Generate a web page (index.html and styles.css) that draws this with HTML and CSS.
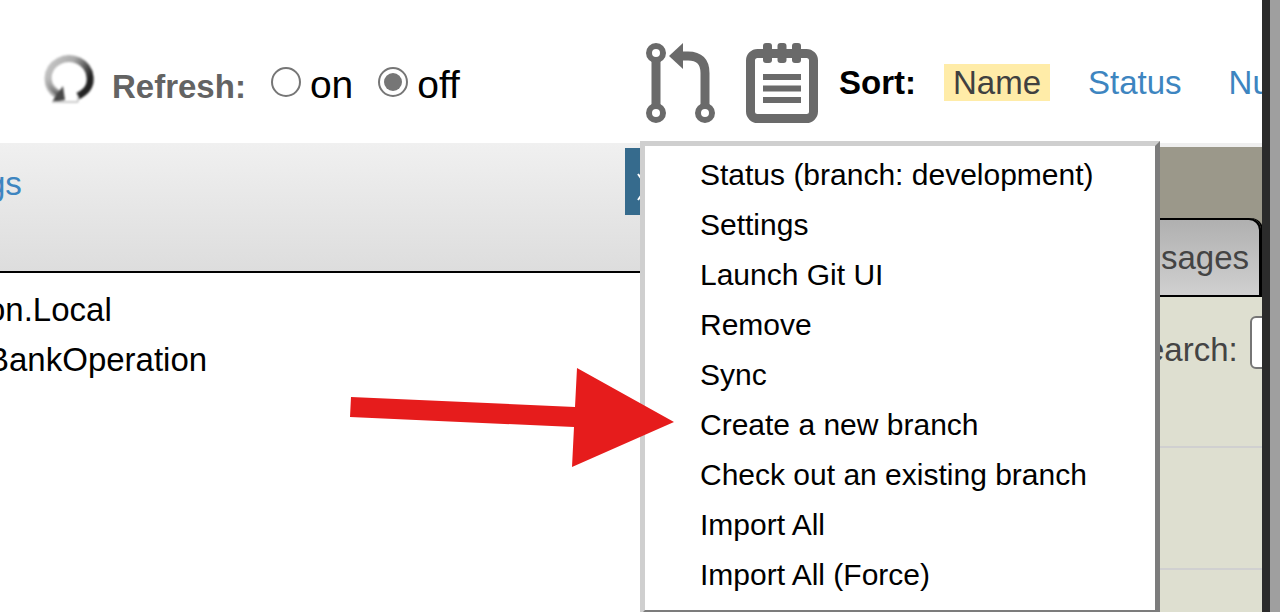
FILE: index.html
```html
<!DOCTYPE html>
<html lang="en">
<head>
<meta charset="utf-8">
<title>Branch menu</title>
<link rel="stylesheet" href="styles.css">
</head>
<body>
<div class="window">
  <div class="app">
    <header class="toolbar">
      <div class="refresh">
        <svg class="refresh-icon" width="50" height="50" viewBox="0 0 50 50" aria-hidden="true">
          <defs>
            <linearGradient id="ring" x1="0" y1="0" x2="1" y2="0.5">
              <stop offset="0" stop-color="#c8c8c8"/>
              <stop offset="0.5" stop-color="#aaa"/>
              <stop offset="1" stop-color="#222"/>
            </linearGradient>
            <linearGradient id="tail" x1="0" y1="0" x2="0" y2="1">
              <stop offset="0" stop-color="#aaa" stop-opacity="0"/>
              <stop offset="1" stop-color="#555"/>
            </linearGradient>
          </defs>
          <path d="M34 42C44 37 47 31 46 23A21 20 0 1 0 13 41" fill="none" stroke="url(#ring)" stroke-width="7"/>
          <path d="M1 23C2 31 6 37 13 42L17 37C11 34 8 29 8 23Z" fill="url(#tail)"/>
          <path d="M19 32L21 46L8 48L13 40Z" fill="#484848"/>
          <path d="M8 48H34M34 42V48" fill="none" stroke="#ccc" stroke-width="2"/>
        </svg>
        <span class="refresh-label" id="refresh-label">Refresh:</span>
        <div class="choices" role="radiogroup" aria-labelledby="refresh-label">
          <label class="choice"><input class="radio" type="radio" name="refresh" value="on">on</label>
          <label class="choice"><input class="radio" type="radio" name="refresh" value="off" checked>off</label>
        </div>
      </div>
      <div class="tools">
        <button class="icon-button" type="button" aria-label="Source control" aria-expanded="true">
          <svg width="70" height="80" viewBox="0 0 70 80" aria-hidden="true" fill="none" stroke="#6a6a6a">
            <circle cx="10" cy="10" r="7" stroke-width="6"/>
            <circle cx="10" cy="70" r="7" stroke-width="6"/>
            <circle cx="59" cy="70" r="7" stroke-width="6"/>
            <path d="M10 18V62M59 62V30Q59 13 42 13H36" stroke-width="9"/>
            <path d="M23 13L37 0V26Z" fill="#6a6a6a" stroke="none"/>
          </svg>
        </button>
        <button class="icon-button" type="button" aria-label="Notes">
          <svg width="72" height="80" viewBox="0 0 72 80" aria-hidden="true" fill="none" stroke="#6a6a6a">
            <rect x="4.5" y="10.5" width="63" height="65" rx="7" stroke-width="9"/>
            <g fill="#6a6a6a" stroke="none">
              <rect x="17" y="0" width="9" height="20" rx="3"/>
              <rect x="31.500" y="0" width="9" height="20" rx="3"/>
              <rect x="46" y="0" width="9" height="20" rx="3"/>
            </g>
            <path d="M17 34H55M17 45.500H55M17 57H55" stroke-width="6"/>
          </svg>
        </button>
        <nav class="sort" aria-label="Sort">
          <b class="sort-title">Sort:</b>
          <a class="sort-link sort-active" href="#name">Name</a>
          <a class="sort-link" href="#status">Status</a>
          <a class="sort-link" href="#nu">Nu</a>
        </nav>
        <ul class="menu">
          <li><a class="menu-link" href="#git-status">Status (branch: development)</a></li>
          <li><a class="menu-link" href="#settings">Settings</a></li>
          <li><a class="menu-link" href="#launch">Launch Git UI</a></li>
          <li><a class="menu-link" href="#remove">Remove</a></li>
          <li><a class="menu-link" href="#sync">Sync</a></li>
          <li><a class="menu-link" href="#create">Create a new branch</a></li>
          <li><a class="menu-link" href="#checkout">Check out an existing branch</a></li>
          <li><a class="menu-link" href="#import">Import All</a></li>
          <li><a class="menu-link" href="#import-force">Import All (Force)</a></li>
        </ul>
      </div>
    </header>
    <div class="body">
      <main class="listing">
        <div class="listing-head">
          <a class="head-link" href="#gs">gs</a>
          <button class="toggle" type="button" aria-label="Expand">
            <svg width="20" height="28" viewBox="0 0 20 28" aria-hidden="true"><path d="M1 1L10 14L1 27M9 1L18 14L9 27" fill="none" stroke="#fff" stroke-width="2"/></svg>
          </button>
        </div>
        <ul class="rows">
          <li>on.Local</li>
          <li>BankOperation</li>
        </ul>
      </main>
      <aside class="side">
        <div class="tabs"><button class="tab" type="button">sages</button></div>
        <div class="search">
          <label for="search">earch:</label>
          <input class="search-box" id="search" type="text">
        </div>
        <div class="cell"></div>
        <div class="cell"></div>
      </aside>
    </div>
    <svg class="pointer" width="324" height="100" viewBox="0 0 324 100" aria-hidden="true"><path d="M1 30L225 40L227 1L324 55L222 100L224 60L0 50Z" fill="#e61c1c"/></svg>
  </div>
  <div class="edge"></div>
</div>
</body>
</html>
```
FILE: styles.css
```css
* { box-sizing: border-box; }
body {
  margin: 0;
  background: #fff;
  color: #000;
  font: 33px/50px "Liberation Sans", Arial, sans-serif;
}
ul { margin: 0; padding: 0; list-style: none; }
a { color: #3d85c0; text-decoration: none; }
button { font: inherit; border: 0; padding: 0; background: none; }
.window { display: flex; height: 100vh; overflow: hidden; }
.app {
  position: relative;
  display: flex;
  flex-direction: column;
  flex: 1;
  min-width: 0;
  overflow: hidden;
}
.edge {
  width: 18px;
  border-left: 8px solid #2b2b2b;
  background: #9f9f9f;
}
.toolbar {
  display: grid;
  grid-template-columns: 1fr 616px;
  padding-top: 43px;
  padding-bottom: 20px;
  white-space: nowrap;
}
.refresh { display: flex; align-items: center; padding-left: 44px; }
.refresh-icon { margin-bottom: 8px; filter: blur(1px); }
.refresh-label { margin: 8px 25px 0 18px; color: #636363; font-weight: bold; }
.choices { display: flex; gap: 25px; font-size: 39px; }
.choice { display: flex; align-items: center; gap: 9px; padding-top: 4px; }
.radio {
  appearance: none;
  display: grid;
  place-content: center;
  width: 30px;
  height: 30px;
  margin: 0 0 6px;
  border: 2px solid #767676;
  border-radius: 50%;
}
.radio:checked::before {
  content: "";
  width: 18px;
  height: 18px;
  border-radius: 50%;
  background: #767676;
}
.tools { position: relative; display: flex; align-items: center; gap: 30px; }
.icon-button { display: flex; flex: none; }
.sort { display: flex; align-items: center; margin-left: -9px; padding-bottom: 2px; line-height: 37px; }
.sort-title { margin-right: 28px; }
.sort-link { margin-right: 29px; padding: 0 9px; }
.sort-active { background: #ffeca8; color: #404040; }
.menu {
  position: absolute;
  z-index: 1;
  top: 98px;
  left: -6px;
  width: 520px;
  padding: 4px 0 10px 55px;
  border: 5px solid;
  border-color: #cfcfcf #7c7c7c #7c7c7c #cfcfcf;
  background: #fff;
  font-size: 30px;
}
.menu-link { display: block; color: #000; }
.body { display: flex; flex: 1; }
.listing { flex: 1; }
.listing-head {
  display: flex;
  justify-content: space-between;
  height: 130px;
  padding-top: 5px;
  border-bottom: 2px solid #000;
  background: linear-gradient(#f0f0f0, #ddd);
}
.head-link { margin-left: -13px; padding-top: 11px; }
.toggle {
  display: flex;
  align-items: center;
  width: 517px;
  height: 67px;
  padding: 10px 0 0 12px;
  background: #366b8d;
}
.rows { margin-left: -13px; padding-top: 12px; }
.side { width: 120px; border-top: 4px solid #efefef; background: #dedfd0; }
.tabs { padding: 71px 1px 0 0; background: #9b988a; }
.tab {
  display: block;
  width: 100%;
  height: 79px;
  padding: 0 10px 0 0;
  border: 2px solid #000;
  border-left: 0;
  border-radius: 0 12px 0 0;
  box-shadow: 2px 0 0 #000;
  background: linear-gradient(#b0b0b0, #d0d0d0);
  color: #444;
  text-align: right;
}
.search {
  display: flex;
  gap: 12px;
  height: 151px;
  padding: 19px 0 0 4px;
  border-bottom: 2px solid #d0d0d0;
  color: #444;
}
.search label { padding-top: 9px; }
.search-box {
  flex: none;
  width: 160px;
  height: 53px;
  padding: 0 8px;
  border: 2px solid #767676;
  border-radius: 6px;
  background: #fff;
  font: inherit;
}
.cell { height: 122px; border-bottom: 2px solid #d0d0d0; }
.pointer { position: absolute; z-index: 2; left: 350px; top: 367px; }
```
